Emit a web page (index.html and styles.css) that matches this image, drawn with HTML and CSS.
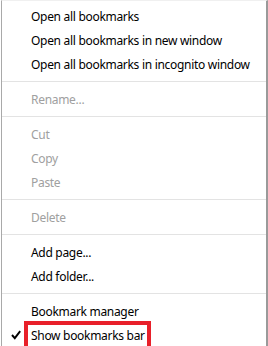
FILE: index.html
```html
<!DOCTYPE html>
<html>
<head>
<meta charset="utf-8">
<link rel="stylesheet" href="styles.css">
</head>
<body>
<div class="menu">
  <div class="item">Open all bookmarks</div>
  <div class="item">Open all bookmarks in new window</div>
  <div class="item">Open all bookmarks in incognito window</div>
  <div class="sep"></div>
  <div class="item disabled">Rename...</div>
  <div class="sep"></div>
  <div class="item disabled">Cut</div>
  <div class="item disabled">Copy</div>
  <div class="item disabled">Paste</div>
  <div class="sep"></div>
  <div class="item disabled">Delete</div>
  <div class="sep"></div>
  <div class="item">Add page...</div>
  <div class="item">Add folder...</div>
  <div class="sep"></div>
  <div class="item">Bookmark manager</div>
  <div class="item checked">
    <svg class="check" width="10" height="10" viewBox="0 0 10 10"><path d="M1 5 L3.8 8.2 L9.2 1.2" fill="none" stroke="#000" stroke-width="1.9"/></svg>
    <span class="label">Show bookmarks bar</span>
    <span class="highlight"></span>
  </div>
</div>
</body>
</html>
```
FILE: styles.css
```css
html, body {
  margin: 0;
  padding: 0;
  background: #fff;
}
body {
  width: 268px;
  height: 346px;
  overflow: hidden;
}
.menu {
  margin-left: 1px;
  width: 264px;
  height: 342px;
  overflow: hidden;
  border-left: 1px solid #a9a9a9;
  border-right: 2px solid #9a9a9a;
  border-top: 1px solid #f0f0f0;
  padding-top: 3px;
  font-family: "Segoe UI", "Noto Sans", "Open Sans", sans-serif;
  font-size: 12px;
  letter-spacing: -0.3px;
  color: #000;
}
.item {
  position: relative;
  height: 24px;
  line-height: 25px;
  padding-left: 29px;
  white-space: nowrap;
}
.disabled {
  color: #a0a0a0;
}
.sep {
  height: 11px;
  display: flex;
  align-items: center;
}
.sep::before {
  content: "";
  display: block;
  width: 100%;
  height: 1px;
  background: #e3e3e3;
}
.check {
  position: absolute;
  left: 9px;
  top: 7px;
}
.highlight {
  position: absolute;
  left: 22px;
  top: -2px;
  width: 119px;
  height: 30px;
  border: 4px solid #e8202a;
}
```
